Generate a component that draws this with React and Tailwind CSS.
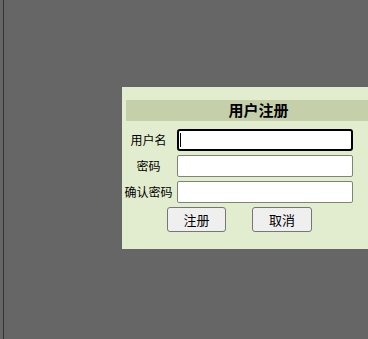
import React from 'react';

const font = { fontFamily: '"Noto Sans CJK SC", "Noto Sans", sans-serif' };

const Row = ({ label, focused }) => (
    <div className="flex items-center h-[22px]">
        <span className="w-[51px] text-center text-[12px] leading-none text-black">{label}</span>
        <div className="relative ml-[3px]">
            <input
                type="text"
                className={`block w-[176px] h-[22px] bg-white px-1 text-[12px] outline-none ${focused
                    ? 'border-2 border-black rounded-[3px]'
                    : 'border border-[#7d8574] rounded-[2px]'
                    }`}
            />
            {/* text caret of the focused field */}
            {focused && <span className="absolute left-[3px] top-[4px] w-[1px] h-[14px] bg-black"></span>}
        </div>
    </div>
);

const App = () => {
    return (
        <div className="w-[368px] h-[339px] bg-[#666666] overflow-hidden flex" style={font}>
            <div className="w-[3px] shrink-0"></div>
            <div className="w-[1px] shrink-0 bg-[#333333]"></div>

            <div className="pl-[118px] pt-[87px] shrink-0">
                {/* Register panel */}
                <div className="w-[272px] bg-[#e2ecce] pl-[1px] pr-[3px] pt-[13px] pb-[17px]">
                    <div className="ml-[3px] h-[21px] bg-[#c5d0ab] flex items-center justify-center text-[15px] font-bold text-black">
                        用户注册
                    </div>

                    <div className="mt-[8px] flex flex-col gap-[4px]">
                        <Row label="用户名" focused />
                        <Row label="密码" />
                        <Row label="确认密码" />
                    </div>

                    <div className="mt-[4px] flex h-[25px]">
                        <button className="ml-[44px] w-[59px] h-[25px] bg-[#efefef] border border-[#767676] rounded-[3px] text-[13px] text-black">
                            注册
                        </button>
                        <button className="ml-[26px] w-[60px] h-[25px] bg-[#efefef] border border-[#767676] rounded-[3px] text-[13px] text-black">
                            取消
                        </button>
                    </div>
                </div>
            </div>
        </div>
    );
};

export default App;
